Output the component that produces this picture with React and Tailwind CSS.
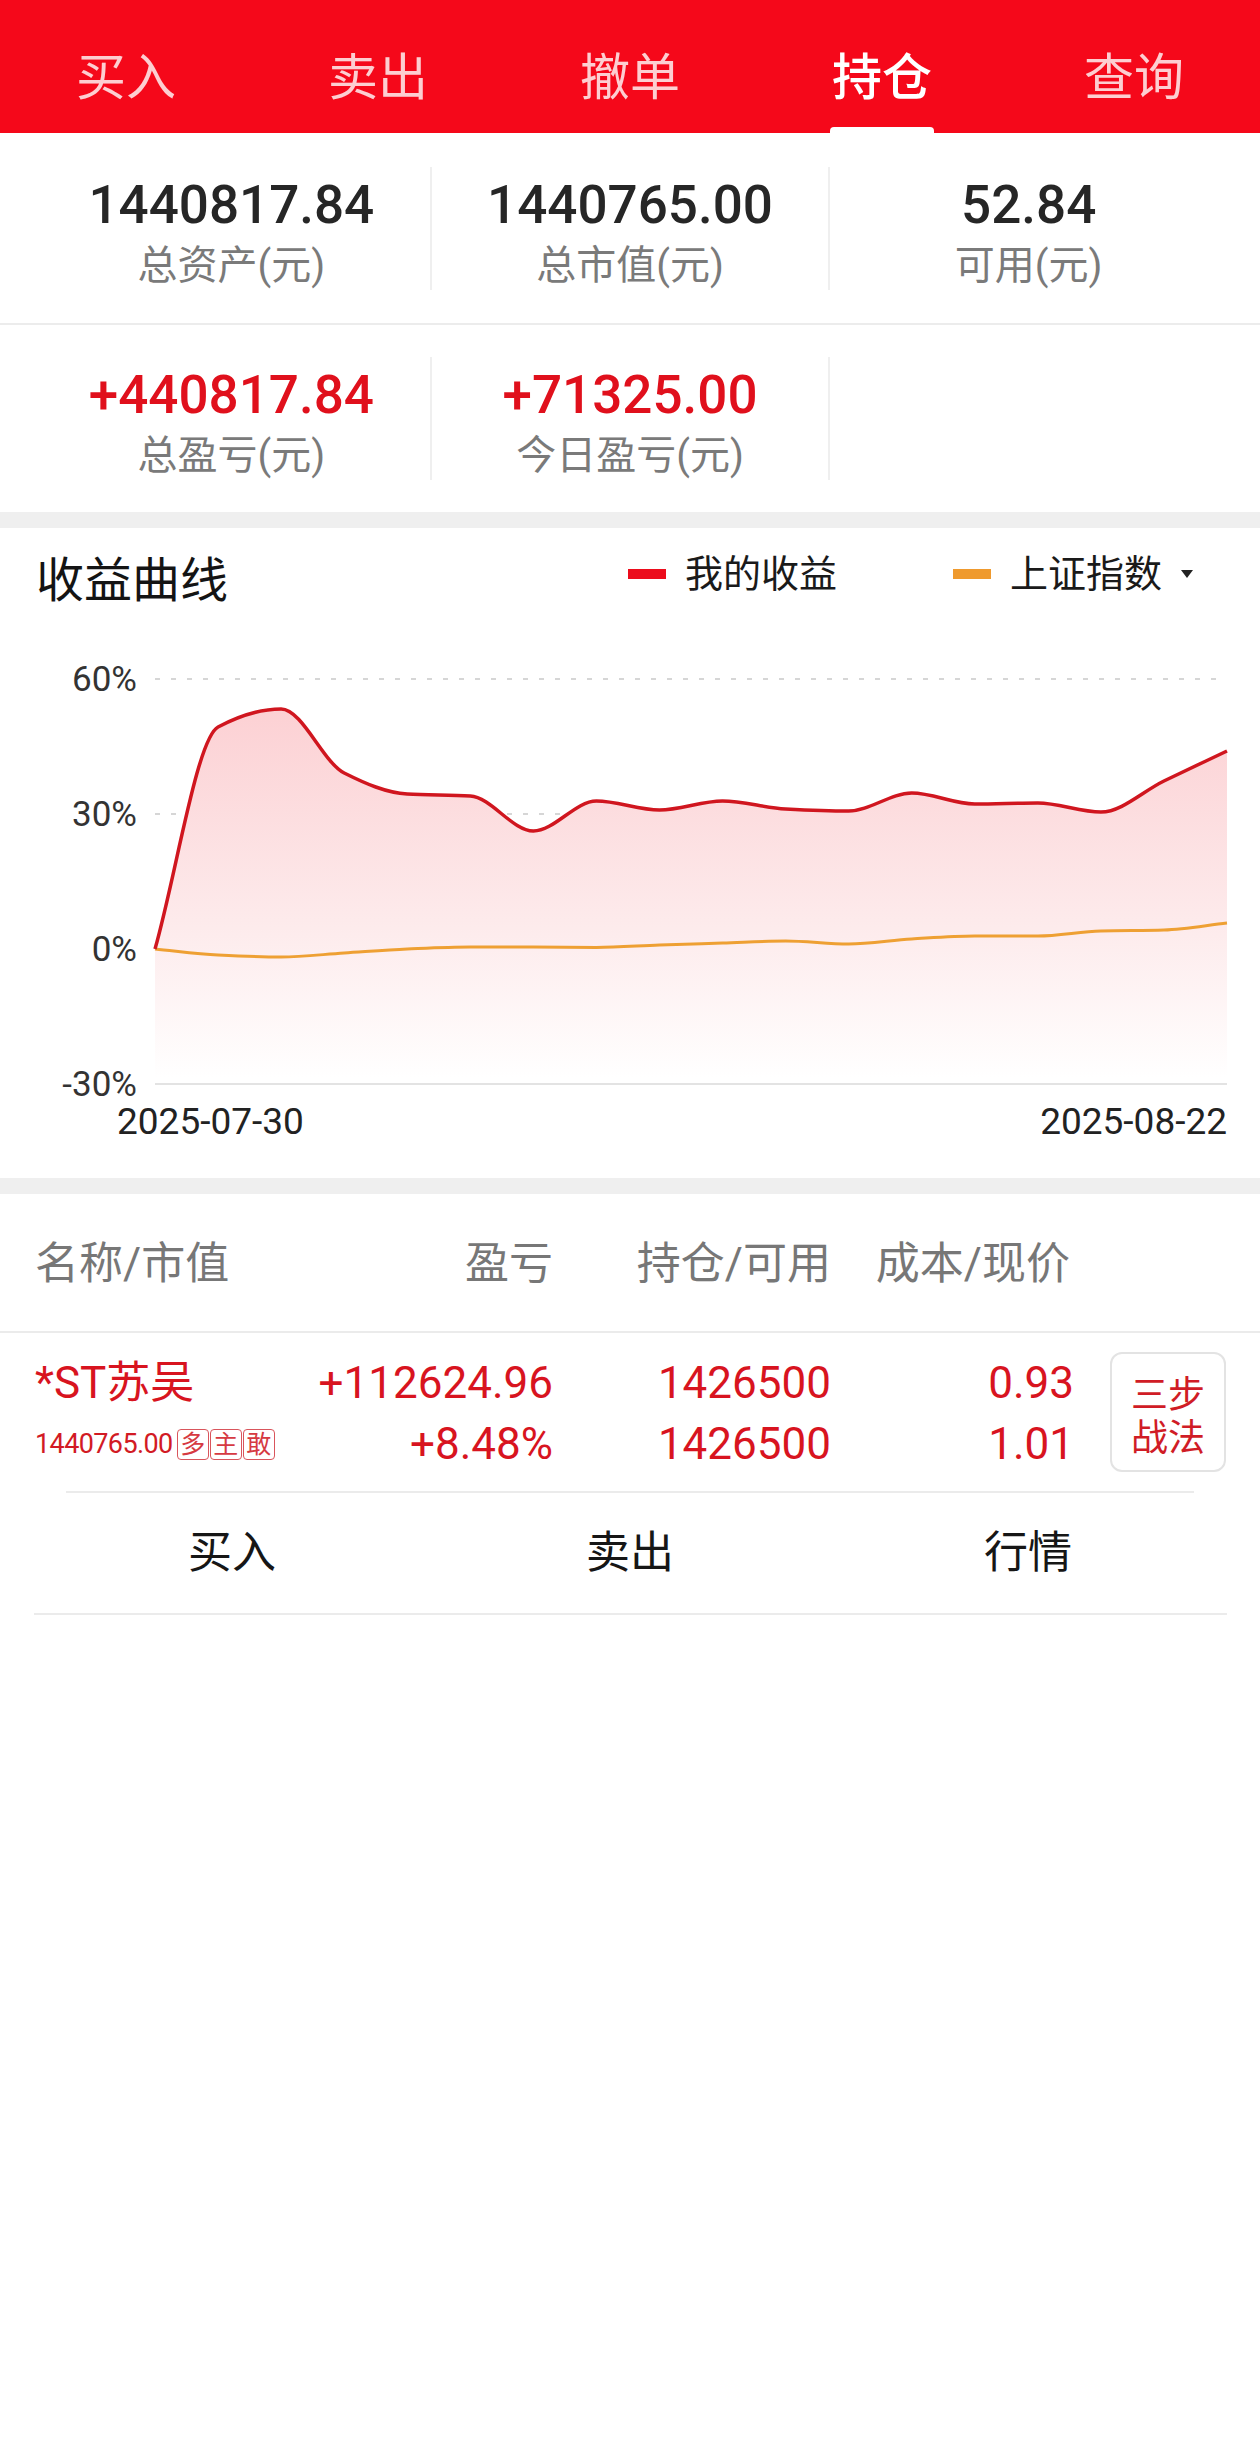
import React from "react";

const F = "font-['Roboto','Noto_Sans_CJK_SC',sans-serif]";

const X0 = 155;
const X1 = 1227;
const redFull = [946, 724, 706, 770, 791, 793, 828, 798, 807, 798, 806, 808, 790, 801, 800, 809, 778, 748];
const orangeFull = [946, 952, 954, 950, 946, 944, 944, 944.5, 942, 940, 938, 941, 936, 933, 933, 928, 927, 920];

function toPts(arr) {
  const n = arr.length;
  return arr.map((y, i) => [X0 + ((X1 - X0) * i) / (n - 1), y - 630]);
}

function monotone(pts) {
  const n = pts.length;
  const dx = [];
  const m = [];
  for (let i = 0; i < n - 1; i++) {
    dx[i] = pts[i + 1][0] - pts[i][0];
    m[i] = (pts[i + 1][1] - pts[i][1]) / dx[i];
  }
  const t = [];
  t[0] = m[0];
  t[n - 1] = m[n - 2];
  for (let i = 1; i < n - 1; i++) {
    if (m[i - 1] * m[i] <= 0) t[i] = 0;
    else
      t[i] =
        (3 * (dx[i - 1] + dx[i])) /
        ((2 * dx[i] + dx[i - 1]) / m[i - 1] + (dx[i] + 2 * dx[i - 1]) / m[i]);
  }
  let d = `M${pts[0][0]},${pts[0][1]}`;
  for (let i = 0; i < n - 1; i++) {
    const h = dx[i] / 3;
    d += ` C${pts[i][0] + h},${pts[i][1] + t[i] * h} ${pts[i + 1][0] - h},${pts[i + 1][1] - t[i + 1] * h} ${pts[i + 1][0]},${pts[i + 1][1]}`;
  }
  return d;
}

function Chart() {
  const redPath = monotone(toPts(redFull));
  const orangePath = monotone(toPts(orangeFull));
  const fillPath = `${redPath} L${X1},445 L${X0},445 Z`;
  const grid = [
    { y: 46, label: "60%" },
    { y: 181, label: "30%" },
    { y: 316, label: "0%" },
  ];
  return (
    <svg width="1260" height="520" viewBox="0 0 1260 520" className="block">
      <defs>
        <linearGradient id="redFill" x1="0" y1="70" x2="0" y2="445" gradientUnits="userSpaceOnUse">
          <stop offset="0" stopColor="#fcd0d3" />
          <stop offset="0.6" stopColor="#fdebec" />
          <stop offset="1" stopColor="#ffffff" />
        </linearGradient>
      </defs>
      {grid.map((g) => (
        <line key={g.label} x1={X0} x2={X1} y1={g.y} y2={g.y} stroke="#d6d6d6" strokeWidth="2" strokeDasharray="5 11" />
      ))}
      <line x1={X0} x2={X1} y1={451} y2={451} stroke="#e3e3e3" strokeWidth="2" />
      <path d={fillPath} fill="url(#redFill)" />
      <path d={orangePath} fill="none" stroke="#eea033" strokeWidth="3" strokeLinejoin="round" />
      <path d={redPath} fill="none" stroke="#d0161f" strokeWidth="3.5" strokeLinejoin="round" />
      {grid.map((g) => (
        <text key={g.label} x="137" y={g.y} textAnchor="end" dominantBaseline="central" fill="#333" className={`${F} text-[35px]`}>
          {g.label}
        </text>
      ))}
      <text x="137" y="451" textAnchor="end" dominantBaseline="central" fill="#333" className={`${F} text-[35px]`}>
        -30%
      </text>
      <text x="117" y="488" textAnchor="start" dominantBaseline="central" fill="#222" className={`${F} text-[37px]`}>
        2025-07-30
      </text>
      <text x="1227" y="488" textAnchor="end" dominantBaseline="central" fill="#222" className={`${F} text-[37px]`}>
        2025-08-22
      </text>
    </svg>
  );
}

function Tabs() {
  const tabs = ["买入", "卖出", "撤单", "持仓", "查询"];
  return (
    <div className="h-[133px] bg-[#f5081a] flex">
      {tabs.map((t, i) => (
        <div key={t} className="relative flex-1 flex items-center justify-center pt-[22px]">
          <span className={i === 3 ? "text-[50px] leading-[56px] text-white font-medium" : "text-[50px] leading-[56px] text-white/80"}>{t}</span>
          {i === 3 && (
            <div className="absolute bottom-0 left-1/2 -translate-x-1/2 w-[104px] h-[6px] bg-white rounded-t-[4px]" />
          )}
        </div>
      ))}
    </div>
  );
}

function Stat({ value, label, red, first }) {
  return (
    <div className={`flex-1 h-[123px] flex flex-col items-center pt-[10px] ${first ? "" : "border-l-2 border-[#efefef]"}`}>
      {value ? (
        <>
          <div className={`text-[53px] leading-[56px] font-medium ${red ? "text-[#e0101c]" : "text-[#262626]"}`}>{value}</div>
          <div className="mt-[10px] text-[40px] leading-[46px] text-[#7a7a7a]">{label}</div>
        </>
      ) : null}
    </div>
  );
}

export default function App() {
  return (
    <div className={`${F} w-[1260px] min-h-[2444px] bg-white`}>
      <Tabs />
      <div className="px-[33px] h-[192px] flex items-center border-b-2 border-[#ececec]">
        <Stat first value="1440817.84" label="总资产(元)" />
        <Stat value="1440765.00" label="总市值(元)" />
        <Stat value="52.84" label="可用(元)" />
      </div>
      <div className="px-[33px] h-[187px] flex items-center">
        <Stat first red value="+440817.84" label="总盈亏(元)" />
        <Stat red value="+71325.00" label="今日盈亏(元)" />
        <Stat />
      </div>
      <div className="h-[16px] bg-[#efefef]" />
      <div className="h-[650px]">
        <div className="h-[105px] flex items-center justify-between pl-[36px] pr-[66px]">
          <div className="text-[48px] leading-[56px] text-[#141414]">收益曲线</div>
          <div className="flex items-center mb-[14px] text-[38px] leading-[44px] text-[#1a1a1a]">
            <div className="w-[38px] h-[10px] bg-[#ec0c1c]" />
            <span className="ml-[19px]">我的收益</span>
            <div className="ml-[116px] w-[38px] h-[10px] bg-[#ef9a2e]" />
            <span className="ml-[19px]">上证指数</span>
            <svg width="14" height="10" viewBox="0 0 14 10" className="ml-[18px]">
              <path d="M1 1 L13 1 L7 9 Z" fill="#222" />
            </svg>
          </div>
        </div>
        <Chart />
      </div>
      <div className="h-[16px] bg-[#efefef]" />
      <div className="h-[139px] border-b-2 border-[#ebebeb] flex items-center pl-[35px] pr-[34px] pt-[2px] text-[44px] leading-[52px] text-[#777]">
        <div className="w-[300px]">名称/市值</div>
        <div className="w-[218px] text-right">盈亏</div>
        <div className="w-[278px] text-right">持仓/可用</div>
        <div className="w-[239px] text-right">成本/现价</div>
        <div className="flex-1" />
      </div>
      <div className="h-[158px] flex items-start pl-[35px] pr-[34px] text-[#d8141f]">
        <div className="w-[300px] pt-[21px]">
          <div className="h-[58px] flex items-center text-[44px]">*ST苏吴</div>
          <div className="mt-[3px] h-[58px] flex items-center">
            <span className="text-[27px] tracking-[-0.6px] text-[#d21a24]">1440765.00</span>
            <div className="ml-[4px] flex gap-[1px]">
              {["多", "主", "敢"].map((c) => (
                <span key={c} className="w-[32px] h-[31px] flex items-center justify-center border border-[#d9555c] rounded-[4px] text-[25px] leading-none text-[#d63a42]">
                  {c}
                </span>
              ))}
            </div>
          </div>
        </div>
        <div className="w-[218px] pt-[21px] text-right text-[44px]">
          <div className="h-[58px] flex items-center justify-end">+112624.96</div>
          <div className="mt-[3px] h-[58px] flex items-center justify-end">+8.48%</div>
        </div>
        <div className="w-[278px] pt-[21px] text-right text-[44px]">
          <div className="h-[58px] flex items-center justify-end">1426500</div>
          <div className="mt-[3px] h-[58px] flex items-center justify-end">1426500</div>
        </div>
        <div className="w-[243px] pt-[21px] text-right text-[44px]">
          <div className="h-[58px] flex items-center justify-end">0.93</div>
          <div className="mt-[3px] h-[58px] flex items-center justify-end">1.01</div>
        </div>
        <div className="flex-1 h-full flex items-center justify-end">
          <div className="w-[116px] h-[120px] border-2 border-[#e3e3e3] rounded-[12px] flex flex-col items-center justify-center pt-[10px] text-[37px] leading-[43px] text-[#d01c26]">
            <span>三步</span>
            <span>战法</span>
          </div>
        </div>
      </div>
      <div className="mx-[66px] h-[2px] bg-[#ebebeb]" />
      <div className="h-[120px] px-[33px] flex items-center text-[44px] leading-[52px] text-[#161616]">
        <div className="flex-1 text-center">买入</div>
        <div className="flex-1 text-center">卖出</div>
        <div className="flex-1 text-center">行情</div>
      </div>
      <div className="ml-[34px] mr-[33px] h-[2px] bg-[#ebebeb]" />
    </div>
  );
}
